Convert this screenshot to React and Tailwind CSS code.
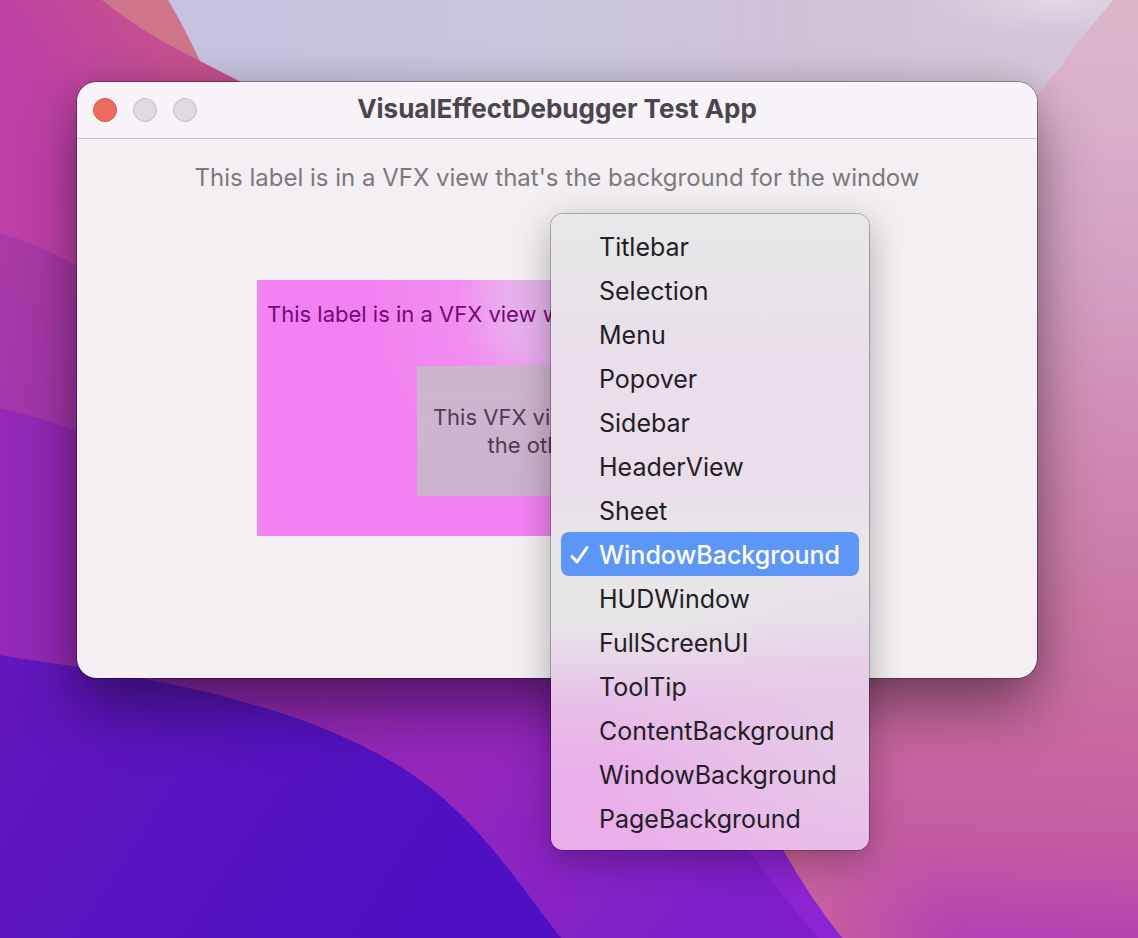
import React from "react";

const materials = [
  "Titlebar",
  "Selection",
  "Menu",
  "Popover",
  "Sidebar",
  "HeaderView",
  "Sheet",
  "WindowBackground",
  "HUDWindow",
  "FullScreenUI",
  "ToolTip",
  "ContentBackground",
  "WindowBackground",
  "PageBackground",
];
const selectedIndex = 7;

function Wallpaper() {
  return (
    <svg
      className="absolute inset-0 h-full w-full"
      viewBox="0 0 1138 938"
      preserveAspectRatio="none"
      aria-hidden="true"
    >
      <defs>
        <linearGradient id="sky" x1="0" y1="0" x2="1" y2="0">
          <stop offset="0.2" stopColor="#c5c3e0" />
          <stop offset="0.5" stopColor="#c9c5dd" />
          <stop offset="0.62" stopColor="#cdc3da" />
          <stop offset="0.7" stopColor="#d0c1d7" />
          <stop offset="0.85" stopColor="#d5c5d8" />
          <stop offset="1" stopColor="#d6c6da" />
        </linearGradient>
        <radialGradient id="glint" gradientUnits="userSpaceOnUse" cx="0" cy="0" r="1" gradientTransform="translate(1060 0) scale(140 34)">
          <stop offset="0" stopColor="#e2dae6" stopOpacity="0.9" />
          <stop offset="1" stopColor="#dfd5e4" stopOpacity="0" />
        </radialGradient>
        <linearGradient id="rose" gradientUnits="userSpaceOnUse" x1="1080" y1="0" x2="1040" y2="938">
          <stop offset="0" stopColor="#dab6c8" />
          <stop offset="0.12" stopColor="#dab1cb" />
          <stop offset="0.3" stopColor="#d49fc2" />
          <stop offset="0.5" stopColor="#cf86b0" />
          <stop offset="0.66" stopColor="#ca76a4" />
          <stop offset="0.8" stopColor="#c866a1" />
          <stop offset="0.9" stopColor="#c45ba2" />
          <stop offset="1" stopColor="#b442b3" />
        </linearGradient>
        <linearGradient id="roseEdge" gradientUnits="userSpaceOnUse" x1="800" y1="900" x2="930" y2="850">
          <stop offset="0" stopColor="#cc6996" stopOpacity="0.8" />
          <stop offset="1" stopColor="#c9629c" stopOpacity="0" />
        </linearGradient>
        <linearGradient id="magenta" gradientUnits="userSpaceOnUse" x1="0" y1="120" x2="150" y2="20">
          <stop offset="0" stopColor="#bf40a8" />
          <stop offset="0.35" stopColor="#bd42a3" />
          <stop offset="1" stopColor="#c5508f" />
        </linearGradient>
        <linearGradient id="plum" x1="0" y1="0" x2="0" y2="1">
          <stop offset="0" stopColor="#a93aa6" />
          <stop offset="1" stopColor="#9b31af" />
        </linearGradient>
        <linearGradient id="violet" gradientUnits="userSpaceOnUse" x1="350" y1="640" x2="700" y2="938">
          <stop offset="0" stopColor="#9329b6" />
          <stop offset="0.4" stopColor="#9427bb" />
          <stop offset="0.75" stopColor="#8522c7" />
          <stop offset="1" stopColor="#7d1ec9" />
        </linearGradient>
        <linearGradient id="indigo" gradientUnits="userSpaceOnUse" x1="0" y1="680" x2="400" y2="938">
          <stop offset="0" stopColor="#6317bd" />
          <stop offset="0.5" stopColor="#5714bf" />
          <stop offset="1" stopColor="#4e10c2" />
        </linearGradient>
      </defs>
      <rect width="1138" height="938" fill="url(#sky)" />
      <rect x="900" width="238" height="60" fill="url(#glint)" />
      <path d="M1113 0 C1094 24 1076 42 1064 62 C1052 78 1044 86 1037 95 C930 220 720 640 760 800 L783 850 Q810 898 842 938 H1138 V0 Z" fill="url(#rose)" />
      <path d="M760 800 L783 850 Q810 898 842 938 H960 V690 H760 Z" fill="url(#roseEdge)" />
      <path d="M90 0 H168 C180 20 191 42 200 61 L120 40 Z" fill="#cf748a" />
      <path d="M0 0 H102 C132 25 166 44 200 61 L241 82 L500 300 V700 H0 Z" fill="url(#magenta)" />
      <path d="M0 233 Q40 245 77 266 L400 450 V660 H0 Z" fill="url(#plum)" />
      <path d="M0 408 Q40 417 77 431 L520 560 L740 770 L783 850 Q810 898 842 938 H0 Z" fill="url(#violet)" />
      <path d="M748 850 L783 850 Q810 898 842 938 H818 Q785 900 748 850 Z" fill="#8b24d1" />
      <path d="M0 655 C50 664 100 668 145 679 C190 688 218 694 240 701 C300 717 340 734 380 755 C410 771 436 790 460 814 C500 853 528 896 561 938 H0 Z" fill="url(#indigo)" />
    </svg>
  );
}

function TitleBar() {
  return (
    <header className="relative flex h-[57px] items-center gap-4 rounded-t-[20px] border-b border-[#cac6cb] bg-[#f7f3f9] px-4">
      <button aria-label="Close" className="size-6 rounded-full border border-[#d4574b] bg-[#ed6b5f]" />
      <button aria-label="Minimize" className="size-6 rounded-full border border-[#c3bfc5] bg-[#dedade]" />
      <button aria-label="Zoom" className="size-6 rounded-full border border-[#c3bfc5] bg-[#dedade]" />
      <h1 className="pointer-events-none absolute inset-x-0 top-3 text-center text-[26px] leading-[30px] font-bold text-[#49474b]">
        VisualEffectDebugger Test App
      </h1>
    </header>
  );
}

function MaterialMenu() {
  return (
    <ul
      role="menu"
      aria-label="Material"
      className="absolute top-[132px] left-[474px] w-[318px] rounded-xl bg-[radial-gradient(ellipse_260px_180px_at_100%_84%,#e6cce8,transparent),linear-gradient(#e8e7e9_0%,#e8e5e9_9%,#eadeeb_24%,#eadeea_42%,#e8e6e9_53%,#e8e6e9_64%,#e8d6e8_70%,#e8bfe8_77%,#eab0ea_87%,#eaafea_100%)] p-2.5 shadow-[0_0_0_1px_rgba(0,0,0,0.25),0_10px_36px_rgba(0,0,0,0.3)]"
    >
      {materials.map((name, i) => (
        <li key={i} role="none">
          <button
            role="menuitemradio"
            aria-checked={i === selectedIndex}
            className={
              "flex h-11 w-full items-center rounded-lg pt-0.5 text-left text-[25px] leading-8 " +
              (i === selectedIndex ? "bg-[#5e96f7] font-medium text-white" : "text-[#222024]")
            }
          >
            <span className="flex w-[38px] shrink-0 justify-center">
              {i === selectedIndex && (
                <svg width="20" height="20" viewBox="0 0 20 20" fill="none" aria-hidden="true">
                  <path d="M2 11.5 L7 17 L17 2.5" stroke="white" strokeWidth="3" strokeLinecap="round" strokeLinejoin="round" />
                </svg>
              )}
            </span>
            {name}
          </button>
        </li>
      ))}
    </ul>
  );
}

export default function App() {
  return (
    <div className="relative min-h-screen overflow-hidden pt-[82px] pr-[101px] pb-[260px] pl-[77px] font-['Inter','Liberation_Sans',sans-serif]">
      <Wallpaper />
      <main className="relative rounded-[20px] bg-[#f3eff3] pb-[142px] shadow-[0_0_0_1px_rgba(0,0,0,0.3),0_30px_60px_rgba(0,0,0,0.42),0_0_30px_rgba(0,0,0,0.1)]">
        <TitleBar />
        <p className="pt-6 text-center text-2xl leading-[30px] text-[#7b797c]">
          This label is in a VFX view that's the background for the window
        </p>
        <section className="mx-auto mt-[87px] h-64 w-[600px] overflow-hidden bg-[#f281f1] bg-[radial-gradient(circle_at_310px_20px,#dfb6e8_0,#e8afec_60px,rgba(242,150,240,0.6)_110px,transparent_200px)] pt-5">
          <p className="truncate pl-2.5 text-[22px] leading-7 text-[#720a76]">
            This label is in a VFX view with
          </p>
          <div className="mx-auto mt-[38px] flex h-[130px] w-[280px] items-center justify-center bg-[linear-gradient(#ccb6cb,#cdb4cf_40%,#cdb2ce)] text-center text-[22px] leading-7 text-[#523a54]">
            <p>
              This VFX view is behind
              <br />
              the other one
            </p>
          </div>
        </section>
        <MaterialMenu />
      </main>
    </div>
  );
}
